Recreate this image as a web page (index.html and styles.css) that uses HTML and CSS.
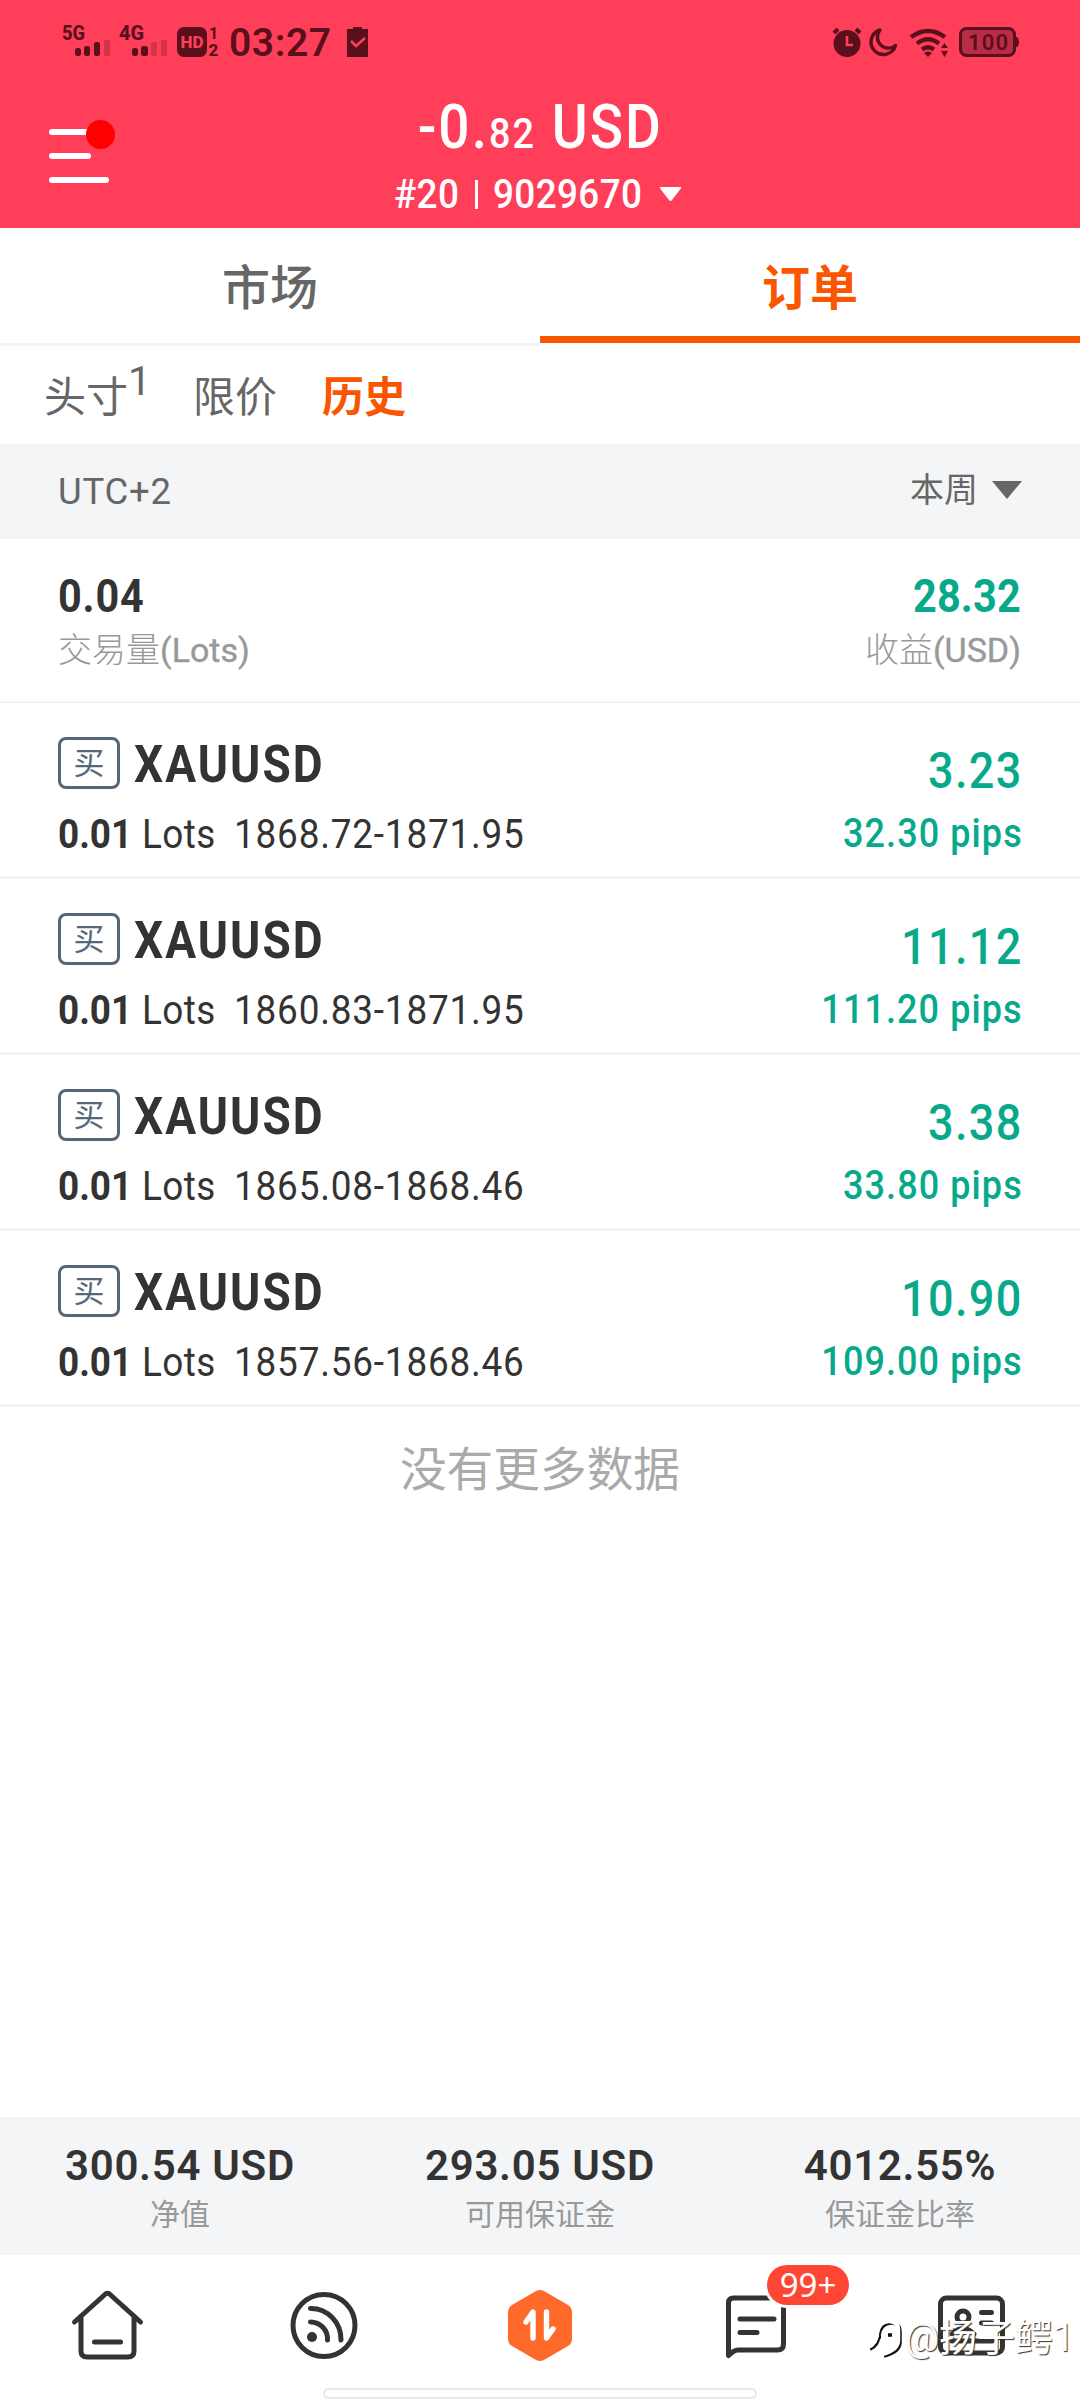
FILE: index.html
```
<!DOCTYPE html>
<html lang="zh-CN">
<head>
<meta charset="utf-8">
<title>订单</title>
<link rel="stylesheet" href="styles.css">
</head>
<body>
<div class="app">
  <header class="header">
    <div class="status">
      <svg class="status-left" viewBox="0 0 320 40" width="320" height="40">
        <g fill="#5a0f1c">
          <text x="2" y="20" font-size="20" font-weight="800" textLength="23" lengthAdjust="spacingAndGlyphs">5G</text>
          <rect x="15" y="28" width="6" height="8" rx="2.5"/><rect x="24" y="26" width="6" height="10" rx="2.5"/><rect x="34" y="22" width="6" height="14" rx="2.5"/>
          <rect x="44" y="20" width="6" height="16" rx="2" opacity=".25"/>
          <text x="59" y="20" font-size="20" font-weight="800" textLength="25" lengthAdjust="spacingAndGlyphs">4G</text>
          <rect x="72" y="28" width="6" height="8" rx="2.5"/><rect x="81" y="26" width="7" height="10" rx="2.5"/>
          <rect x="91" y="22" width="6" height="14" rx="2" opacity=".25"/><rect x="101" y="20" width="6" height="16" rx="2" opacity=".25"/>
          <rect x="117" y="7" width="30" height="30" rx="7"/>
          <text x="149" y="19" font-size="16" font-weight="700">1</text>
          <text x="148.500" y="36" font-size="17" font-weight="800">2</text>
          <path d="M287 9h6v-2h9v2h6v28h-21z"/>
        </g>
        <text x="120.500" y="28" font-size="17" font-weight="800" fill="#ff3f5b" textLength="23" lengthAdjust="spacingAndGlyphs">HD</text>
        <path d="M291 21l5 5 9-8" fill="none" stroke="#ff3f5b" stroke-width="2.500"/>
        <text class="clock" x="169" y="36" font-size="39" textLength="102">03:27</text>
      </svg>
      <svg class="status-right" viewBox="0 0 190 40" width="190" height="40">
        <g fill="#5a0f1c">
          <circle cx="17" cy="23.500" r="13.500"/>
          <path d="M4 13l4-4M30 13l-4-4" stroke="#5a0f1c" stroke-width="4"/>
          <path d="M17 16v9h6" fill="none" stroke="#ff3f5b" stroke-width="2.600"/>
          <path d="M50 10a12.500 12.500 0 1 0 15.500 15.500a11 11 0 0 1-15.500-15.500z" fill="none" stroke="#5a0f1c" stroke-width="3.400" stroke-linejoin="round"/>
          <path d="M81 17q17-12 34 0M87 23.500q11-8.500 22 0M92 29.500q6-4.500 12 0" fill="none" stroke="#5a0f1c" stroke-width="4.200"/>
          <path d="M94 33q4-3 8 0l-4 4zM111 28l3.500-5 3.500 5zM111 31h7l-3.500 6z"/>
          <rect x="130.500" y="8.500" width="54" height="27" rx="6" fill="#b92c45" stroke="#5a0f1c" stroke-width="3"/>
          <path d="M186 17q3 0 3 5t-3 5z"/>
          <text x="138" y="30" font-size="22" font-weight="600" textLength="40">100</text>
        </g>
      </svg>
    </div>
    <div class="account">
      <svg class="menu" viewBox="0 0 70 70" width="70" height="70">
        <path d="M4 16h40M4 40h36M4 64h54" stroke="#fff" stroke-width="6" stroke-linecap="round"/>
        <circle cx="52.500" cy="18.500" r="14.500" fill="#f00"/>
      </svg>
      <div class="balance"><span class="din pl">-0<span class="pl-dot">.</span><small>82</small> USD</span></div>
      <div class="acct"><span class="din acct-no">#20</span><i class="bar"></i><span class="din acct-no">9029670</span><svg class="tri" viewBox="0 0 21 14" width="21" height="14"><path d="M1 0h19q2 0 .5 2l-8.500 11q-1.500 2-3 0l-8.500-11q-1.500-2 .5-2z" fill="#fff"/></svg></div>
    </div>
  </header>

  <nav class="tabs"><div class="tab">市场</div><div class="tab tab-on">订单</div></nav>
  <nav class="subtabs"><span class="sub">头寸<span class="count">1</span></span><span class="sub sub-2">限价</span><span class="sub sub-on">历史</span></nav>

  <div class="filter"><span class="utc">UTC+2</span><span class="week">本周<svg viewBox="0 0 30 18" width="30" height="18"><path d="M0 0h30L15 18z" fill="#666"/></svg></span></div>

  <section class="summary">
    <div class="col"><b class="din sum-v">0.04</b><span class="sum-l">交易量<span class="lat">(Lots)</span></span></div>
    <div class="col col-r"><b class="din din-r sum-v green">28.32</b><span class="sum-l">收益<span class="lat">(USD)</span></span></div>
  </section>

  <article class="row">
    <div class="line"><span class="side">买</span><span class="din sym">XAUUSD</span></div>
    <div class="detail"><b class="din vol">0.01</b><span class="din unit">Lots</span><span class="din range">1868.72-1871.95</span></div>
    <div class="gain din din-r">3.23</div><div class="pips din din-r">32.30 pips</div>
  </article>
  <article class="row">
    <div class="line"><span class="side">买</span><span class="din sym">XAUUSD</span></div>
    <div class="detail"><b class="din vol">0.01</b><span class="din unit">Lots</span><span class="din range">1860.83-1871.95</span></div>
    <div class="gain din din-r">11.12</div><div class="pips din din-r">111.20 pips</div>
  </article>
  <article class="row">
    <div class="line"><span class="side">买</span><span class="din sym">XAUUSD</span></div>
    <div class="detail"><b class="din vol">0.01</b><span class="din unit">Lots</span><span class="din range">1865.08-1868.46</span></div>
    <div class="gain din din-r">3.38</div><div class="pips din din-r">33.80 pips</div>
  </article>
  <article class="row">
    <div class="line"><span class="side">买</span><span class="din sym">XAUUSD</span></div>
    <div class="detail"><b class="din vol">0.01</b><span class="din unit">Lots</span><span class="din range">1857.56-1868.46</span></div>
    <div class="gain din din-r">10.90</div><div class="pips din din-r">109.00 pips</div>
  </article>

  <p class="end">没有更多数据</p>

  <section class="totals">
    <div class="total"><b>300.54 USD</b><span>净值</span></div>
    <div class="total"><b>293.05 USD</b><span>可用保证金</span></div>
    <div class="total"><b>4012.55%</b><span>保证金比率</span></div>
  </section>

  <nav class="nav">
    <div class="item"><svg viewBox="0 0 80 80" width="80" height="80" fill="none" stroke="#333" stroke-width="5" stroke-linecap="round" stroke-linejoin="round"><path d="M6.500 37L37.500 9q2-1.500 4 0L72.500 37M13 33v33q0 6 6 6h41q6 0 6-6V33M26.500 57h26"/></svg></div>
    <div class="item"><svg viewBox="0 0 80 80" width="80" height="80" fill="none" stroke="#333" stroke-width="5" stroke-linecap="round"><circle cx="40" cy="40.500" r="31"/><path d="M26.500 23.500A30 31 0 0 1 57 55M26.500 37A17 17 0 0 1 43.500 55"/><circle cx="28" cy="52" r="5" fill="#333" stroke="none"/></svg></div>
    <div class="item"><svg viewBox="0 0 80 80" width="80" height="80"><path d="M36 6q4-2 8 0l24 14q4 2.500 4 7v27q0 4.500-4 7L44 75q-4 2-8 0L12 61q-4-2.500-4-7V27q0-4.500 4-7z" fill="#ff6a2b"/><path d="M26 37l7-10v26M53 44l-6.500 9V27" fill="none" stroke="#fff" stroke-width="5.400" stroke-linecap="round" stroke-linejoin="round"/></svg></div>
    <div class="item"><svg viewBox="0 0 80 80" width="80" height="80" fill="none" stroke="#333" stroke-width="5" stroke-linecap="round" stroke-linejoin="round"><path d="M12.500 70V18q0-5 5-5h45q5 0 5 5v41q0 6-6 6H22q-4 0-9.500 5.500zM24 34h34M24 47.500h17"/></svg><span class="badge">99+</span></div>
    <div class="item"><svg viewBox="0 0 80 80" width="80" height="80" fill="none" stroke="#333" stroke-width="5" stroke-linecap="round"><rect x="8.500" y="13" width="62" height="55" rx="6"/><circle cx="31" cy="32" r="6"/><path d="M49.500 27.500h10M49.500 38h10M20 49q11-11 22 0M20 56h40"/></svg></div>
  </nav>
  <div class="home-bar"></div>
  <div class="watermark"><svg viewBox="0 0 38 42" width="38" height="42" fill="none"><path d="M3 32q8-3 9-14Q14 6 24 6q9 0 9 9v10q0 10-16 14M7 20h7M21 18h4" stroke="#111" stroke-width="3.500"/><path d="M1 30q8-3 9-14Q12 4 22 4q9 0 9 9v10q0 10-16 14M5 18h7" stroke="#fff" stroke-width="4.500"/></svg><span>@扬子鳄1</span></div>
</div>
</body>
</html>
```
FILE: styles.css
```
* { box-sizing: border-box; }
body { margin: 0; background: #fff; font-family: Roboto, "Noto Sans CJK SC", sans-serif; color: #333; }
.app { position: relative; display: flex; flex-direction: column; width: 1080px; height: 2400px; overflow: hidden; background: #fff; }
svg { display: block; flex: none; overflow: visible; }
.din { display: inline-block; white-space: pre; transform: scaleX(.9); transform-origin: left center; }
.din-r { transform-origin: right center; }

.header { height: 228px; background: #ff3e59; color: #fff; display: flex; flex-direction: column; }
.status { display: flex; justify-content: space-between; padding: 20px 60px 0; height: 72px; }
.clock { fill: #5a0f1c; font-weight: 600; }
.account { display: grid; grid-template-columns: 115px 1fr 115px; grid-template-rows: 84px 60px; }
.menu { grid-row: 1 / 3; margin: 44px 0 0 48px; }
.balance { grid-column: 2; display: flex; justify-content: center; align-items: flex-end; font-size: 61px; line-height: 1; height: 86px; font-weight: 500; letter-spacing: 2.300px; }
.pl { transform-origin: center; }
.pl small { font-size: 42px; }
.acct { grid-column: 2; display: flex; align-items: center; height: 60px; padding: 16px 0 0 279px; font-size: 41px; line-height: 48px; font-weight: 500; letter-spacing: .400px; }
.acct-no { width: 81px; }
.acct-no + .tri { margin-left: 86px; }
.bar { width: 3px; height: 29px; background: #fff; margin-right: 15px; }

.tabs { display: flex; height: 118px; }
.tab { flex: 1; text-align: center; font-size: 48px; line-height: 121px; font-weight: 500; color: #666; border-bottom: 3px solid #f2f3f4; }
.tab-on { color: #fa5500; font-weight: 700; border-bottom: 7px solid #fa5500; height: 115px; }
.subtabs { display: flex; height: 98px; padding-left: 44px; font-size: 42px; line-height: 104px; color: #666; }
.count { display: inline-block; transform: translateY(-17px); font-size: 41px; width: 23px; }
.sub-2 { margin-left: 42px; }
.sub-on { margin-left: 45px; font-weight: 700; color: #fa5500; }

.filter { display: flex; justify-content: space-between; align-items: center; height: 95px; padding: 0 58px; background: #f4f5f7; color: #666; font-size: 36.500px; }
.utc { letter-spacing: .800px; }
.week { display: flex; align-items: center; gap: 14px; font-size: 34px; line-height: 50px; padding-bottom: 4px; }

.summary { display: flex; justify-content: space-between; height: 164px; padding: 30px 59px 0 58px; border-bottom: 2px solid #f2f3f4; }
.col { display: flex; flex-direction: column; align-items: flex-start; }
.col-r { align-items: flex-end; }
.sum-v { font-size: 46px; line-height: 54px; letter-spacing: .900px; }
.col-r .sum-v { letter-spacing: .200px; }
.sum-l { font-size: 34px; line-height: 54px; font-weight: 300; color: #999; }
.lat { font-weight: 400; -webkit-text-stroke: .400px #999; }
.green { color: #08a98b; }

.row { display: grid; grid-template-columns: 1fr auto; grid-template-rows: 96px 77px; height: 176px; flex: none; padding: 0 58px; border-bottom: 3px solid #f2f3f4; }
.line { grid-area: 1 / 1; display: flex; align-items: center; padding-top: 24px; gap: 14px; }
.side { width: 62px; height: 52px; border: 3px solid #56677a; border-radius: 8px; color: #56677a; font-size: 31px; line-height: 48px; text-align: center; }
.sym { font-size: 51px; line-height: 60px; font-weight: 700; letter-spacing: 2.300px; padding-top: 3px; }
.detail { grid-area: 2 / 1; display: grid; grid-template-columns: 84px 92px 1fr; font-size: 41px; line-height: 71px; }
.unit { letter-spacing: .500px; }
.range { letter-spacing: .900px; }
.gain { grid-area: 1 / 2; font-size: 50px; line-height: 60px; padding-top: 38px; margin-right: -1px; letter-spacing: 1.500px; text-align: right; font-weight: 500; color: #08a98b; }
.pips { grid-area: 2 / 2; font-size: 40px; line-height: 69px; margin-right: -1px; letter-spacing: 1.200px; text-align: right; font-weight: 500; color: #08a98b; }

.end { margin: 29px 0 0; text-align: center; font-size: 46.700px; line-height: 68px; color: #aaa; }

.totals { margin-top: auto; display: grid; grid-template-columns: repeat(3, 1fr); flex: 0 0 138px; background: #f4f5f7; }
.total { display: flex; flex-direction: column; align-items: center; padding-top: 24px; }
.total b { font-size: 42px; line-height: 50px; font-weight: 600; letter-spacing: .700px; }
.total span { font-size: 30px; line-height: 48px; color: #999; }

.nav { display: grid; grid-template-columns: repeat(5, 1fr); flex: 0 0 145px; padding-top: 30px; }
.item { position: relative; display: flex; justify-content: center; align-items: flex-start; }
.badge { position: absolute; left: 119px; top: -20px; width: 82px; height: 40px; border-radius: 20px; background: #ff4534; box-shadow: 0 0 0 3px #fff; color: #fff; font: 33px/39px "Noto Sans", sans-serif; text-align: center; }
.home-bar { position: absolute; left: 323px; bottom: 1px; width: 434px; height: 11px; border: 2px solid #e8e8e8; border-radius: 6px; background: #fff; }
.watermark { position: absolute; left: 867px; top: 2312px; display: flex; align-items: center; color: #fff; font-size: 38px; line-height: 52px; text-shadow: 1px 1px 1px #333; white-space: nowrap; }
```
